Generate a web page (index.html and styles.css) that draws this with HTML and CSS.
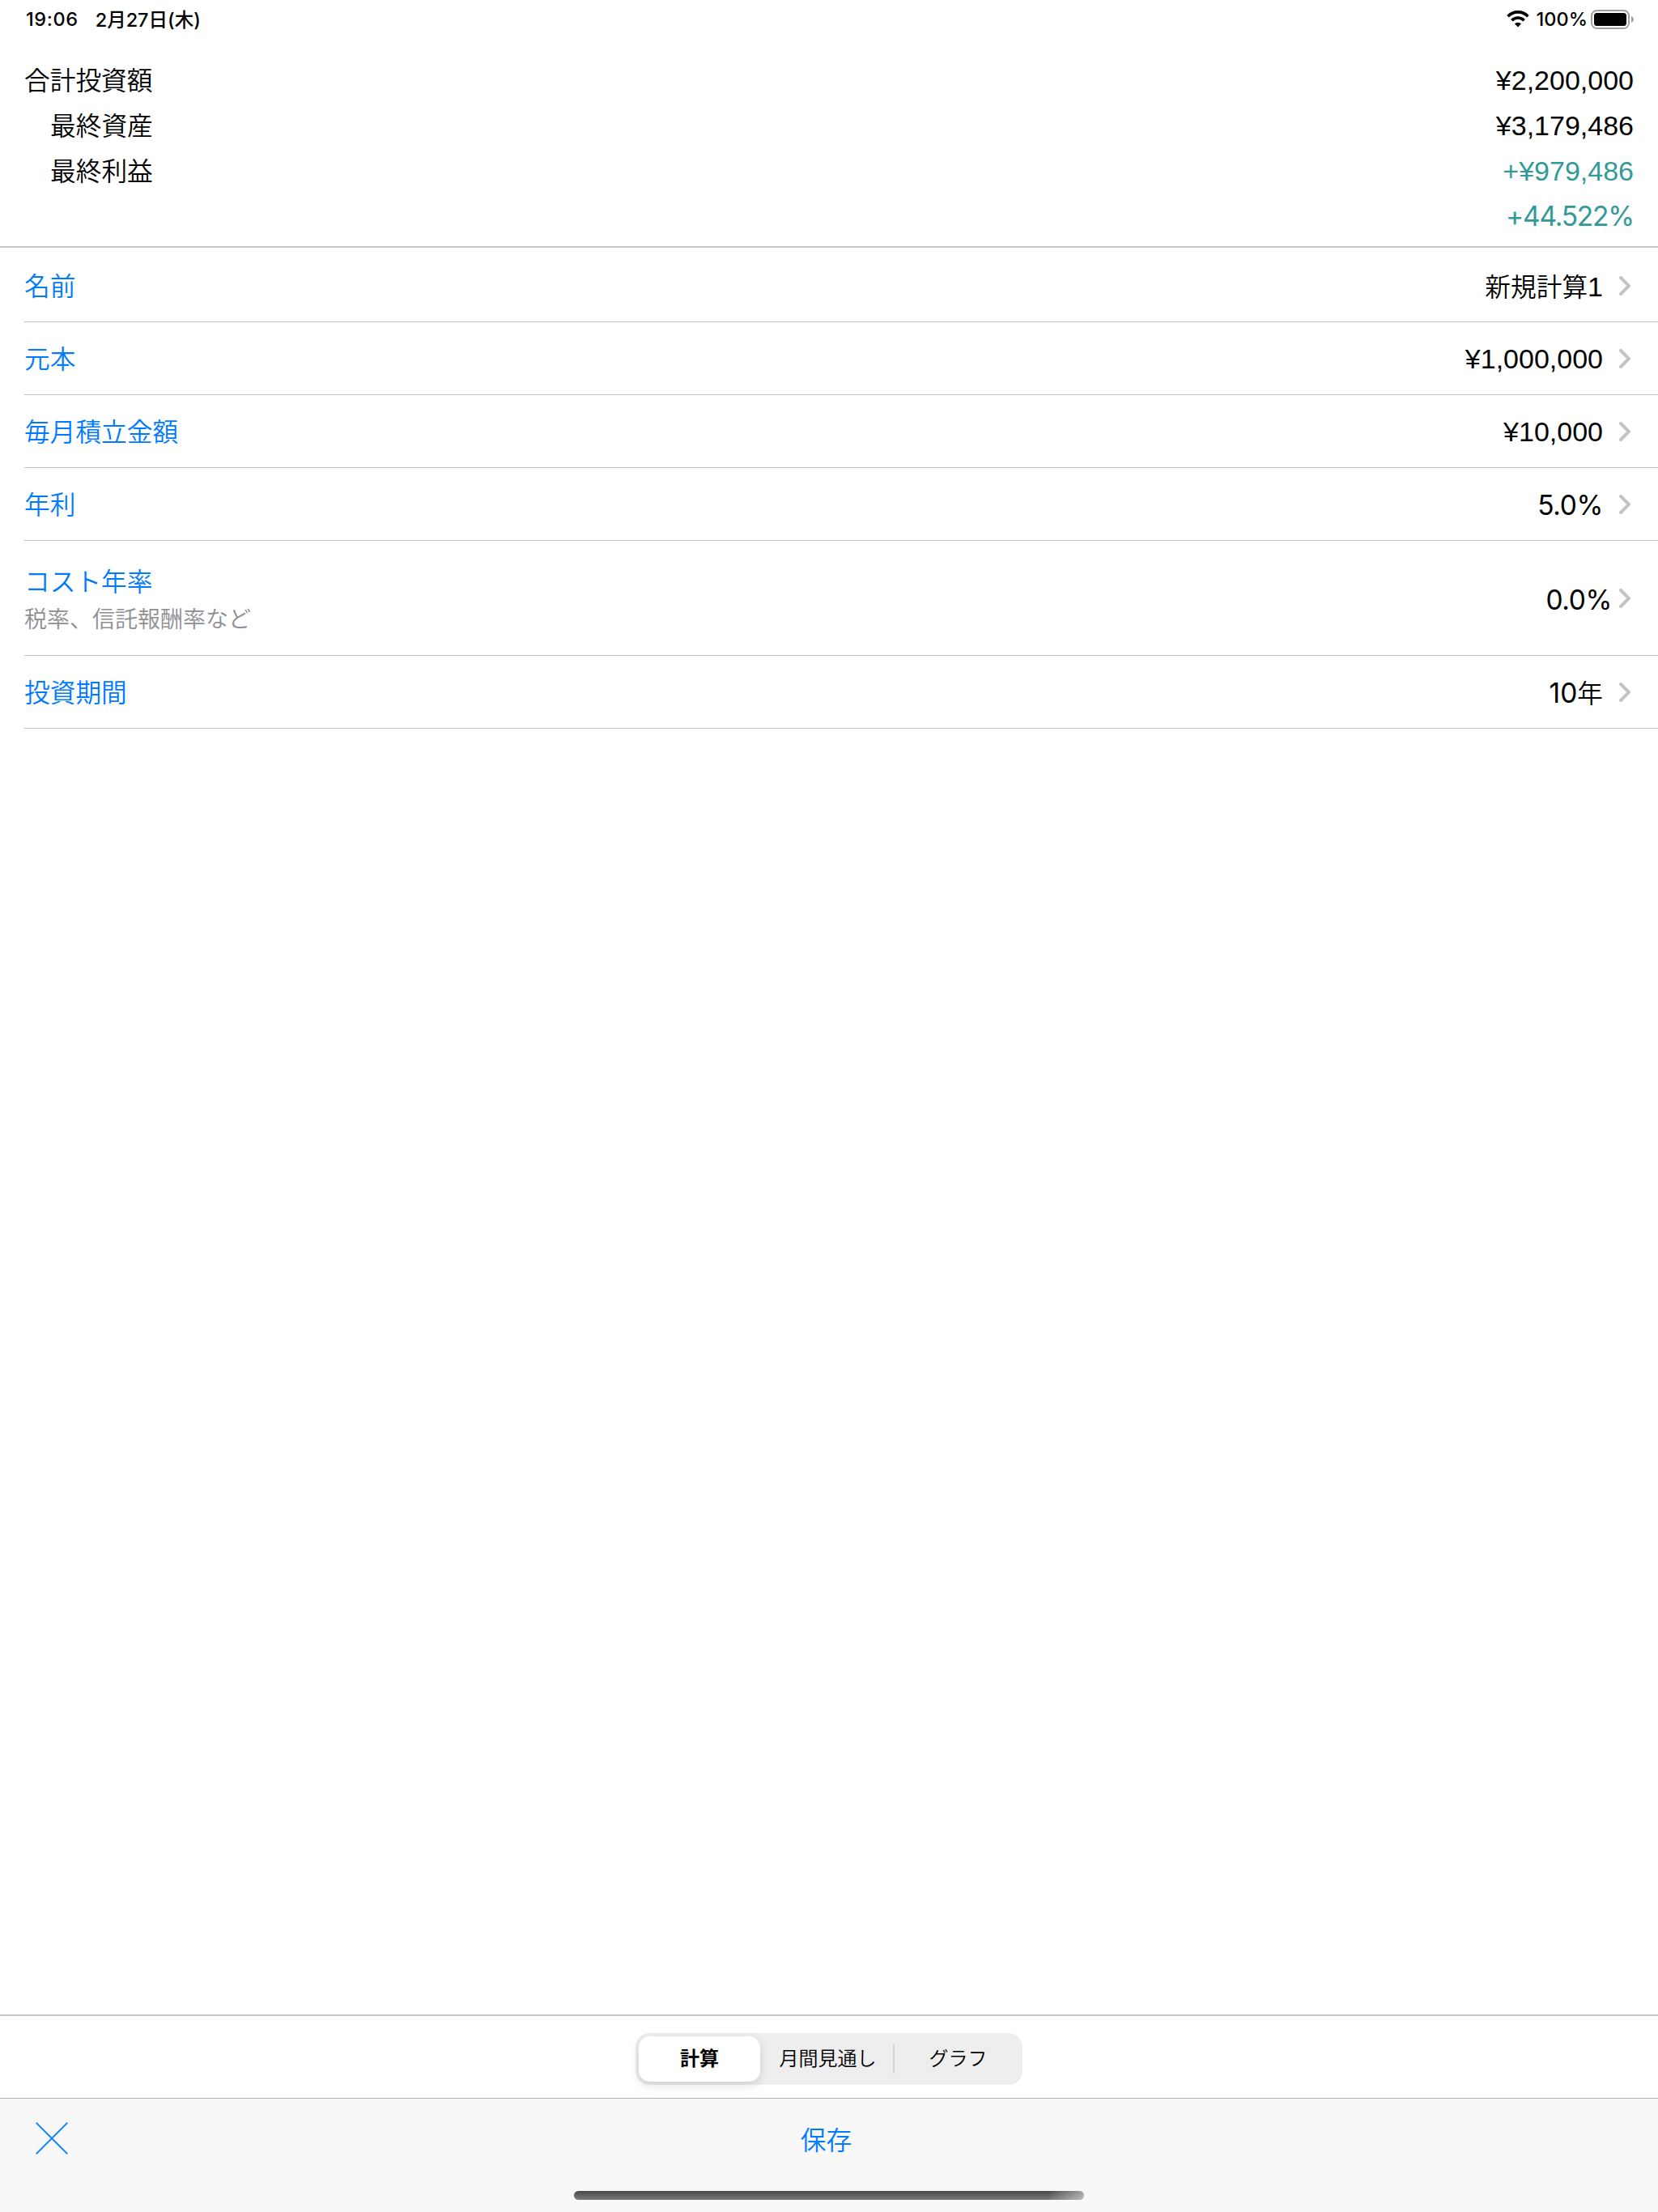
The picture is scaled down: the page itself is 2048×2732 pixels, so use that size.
FILE: index.html
```html
<!DOCTYPE html>
<html lang="ja">
<head>
    <meta charset="UTF-8">
    <meta name="viewport" content="width=device-width, initial-scale=1.0">
    <title>新規計算1</title>
    <link rel="stylesheet" href="styles.css">
</head>
<body>

    <div class="app">
        <div class="status-bar">
            <span class="time">19:06</span>
            <span class="date">2月27日(木)</span>
            <div class="status-icons">
                <svg class="wifi" width="28" height="21" viewBox="0 0 28 21">
                    <path d="M1.6 7.2 A17.3 17.3 0 0 1 26.4 7.2" fill="none" stroke="#000" stroke-width="3.7"/>
                    <path d="M6.4 12.2 A10.6 10.6 0 0 1 21.6 12.2" fill="none" stroke="#000" stroke-width="3.6"/>
                    <path d="M14 20.4 L9.9 16.3 A6 6 0 0 1 18.1 16.3 Z" fill="#000"/>
                </svg>
                <span class="battery-text">100%</span>
                <svg class="battery" width="54" height="24" viewBox="0 0 54 24">
                    <rect x="1" y="1" width="46" height="22" rx="6.5" fill="none" stroke="#a0a0a0" stroke-width="2"/>
                    <rect x="4" y="4" width="40" height="16" rx="3.5" fill="#000"/>
                    <path d="M50 8 Q53 9.5 53 12 Q53 14.5 50 16 Z" fill="#a0a0a0"/>
                </svg>
            </div>
        </div>

        <!-- 合計 -->
        <div class="summary">
            <div class="summary-row"><span class="title">合計投資額</span><span class="yen">¥2,200,000</span></div>
            <div class="summary-row"><span class="title indent">最終資産</span><span class="yen">¥3,179,486</span></div>
            <div class="summary-row"><span class="title indent">最終利益</span><span class="yen profit">+¥979,486</span></div>
            <div class="summary-row"><span></span><span class="percent profit rate">+44.522%</span></div>
        </div>

        <!-- 入力項目 -->
        <div class="list">
            <div class="row">
                <span class="label">名前</span>
                <span class="value name"><span class="kanji">新規計算</span>1</span>
                <svg class="arrow" width="14" height="24" viewBox="0 0 14 24"><path d="M2 2 L12 12 L2 22"/></svg>
            </div>
            <div class="row">
                <span class="label">元本</span>
                <span class="value yen">¥1,000,000</span>
                <svg class="arrow" width="14" height="24" viewBox="0 0 14 24"><path d="M2 2 L12 12 L2 22"/></svg>
            </div>
            <div class="row">
                <span class="label">毎月積立金額</span>
                <span class="value yen">¥10,000</span>
                <svg class="arrow" width="14" height="24" viewBox="0 0 14 24"><path d="M2 2 L12 12 L2 22"/></svg>
            </div>
            <div class="row">
                <span class="label">年利</span>
                <span class="value percent">5.0%</span>
                <svg class="arrow" width="14" height="24" viewBox="0 0 14 24"><path d="M2 2 L12 12 L2 22"/></svg>
            </div>
            <div class="row cost">
                <div class="label">
                    <div>コスト年率</div>
                    <div class="note">税率、信託報酬率など</div>
                </div>
                <span class="value percent">0.0%</span>
                <svg class="arrow" width="14" height="24" viewBox="0 0 14 24"><path d="M2 2 L12 12 L2 22"/></svg>
            </div>
            <div class="row">
                <span class="label">投資期間</span>
                <span class="value period">10<span class="kanji">年</span></span>
                <svg class="arrow" width="14" height="24" viewBox="0 0 14 24"><path d="M2 2 L12 12 L2 22"/></svg>
            </div>
        </div>

        <div class="tabs">
            <div class="segmented">
                <div class="segment selected">計算</div>
                <div class="segment middle">月間見通し</div>
                <div class="divider"></div>
                <div class="segment last">グラフ</div>
            </div>
        </div>

        <div class="toolbar">
            <div class="toolbar-items">
                <svg class="close" width="40" height="40" viewBox="0 0 40 40"><path d="M0.7 0.7 L39.3 39.3 M39.3 0.7 L0.7 39.3"/></svg>
                <span class="save">保存</span>
            </div>
            <div class="home-indicator"></div>
        </div>
    </div>

</body>
</html>
```
FILE: styles.css
```css
* {
    box-sizing: border-box;
}
body {
    margin: 0;
    background-color: #fff;
    color: #000;
    font-family: "Noto Sans CJK JP", sans-serif;
    font-size: 31.7px;
    font-weight: 350;
}
.app {
    display: flex;
    flex-direction: column;
    height: 2732px;
}
.status-bar {
    display: flex;
    align-items: center;
    height: 48px;
    padding: 0 29px 1px 32px;
    font-family: Inter, "Noto Sans CJK JP", sans-serif;
    font-size: 23.5px;
    font-weight: 500;
}
.time {
    letter-spacing: 0.6px;
}
.date {
    margin-left: 21px;
    padding-bottom: 1px;
}
.status-icons {
    display: flex;
    align-items: center;
    margin-left: auto;
}
.battery-text {
    margin: 0 4px 0 9px;
}
.summary {
    height: 258px;
    padding: 22px 30px 0;
    border-bottom: 2px solid #c6c6c8;
}
.summary-row {
    display: flex;
    justify-content: space-between;
    align-items: center;
    height: 56px;
}
.title {
    padding-bottom: 2px;
}
.indent {
    padding-left: 32px;
}
.yen {
    padding-top: 2px;
    font-family: "Liberation Sans", sans-serif;
    font-size: 34px;
    font-weight: 400;
}
.percent {
    padding-top: 2px;
    font-family: Inter, sans-serif;
    font-size: 33.5px;
    font-weight: 400;
    letter-spacing: -0.4px;
}
.rate {
    letter-spacing: -1.2px;
}
.name,
.period {
    padding-bottom: 2px;
    font-family: "Liberation Sans", sans-serif;
    font-size: 34px;
    font-weight: 400;
}
.period {
    font-family: Inter, sans-serif;
    font-size: 33.5px;
}
.kanji {
    font-family: "Noto Sans CJK JP", sans-serif;
    font-size: 31.7px;
    font-weight: 350;
}
.profit {
    color: #339999;
}
.list {
    flex: 1;
    padding: 2px 0 0 30px;
}
.row {
    display: flex;
    align-items: center;
    height: 90px;
    padding-right: 34px;
    border-bottom: 1px solid #c4c4c6;
}
.label {
    padding-bottom: 3px;
    color: #007aff;
}
.value {
    margin-left: auto;
}
.arrow {
    margin-left: 20px;
    fill: none;
    stroke: #c4c4c6;
    stroke-width: 4;
    stroke-linecap: round;
}
.cost {
    height: 142px;
}
.cost .label {
    padding: 2px 0 0;
    line-height: 47px;
}
.cost .percent {
    padding-top: 4px;
}
.cost .arrow {
    margin-left: 9px;
}
.note {
    color: #8e8e93;
    font-size: 28px;
}
.tabs {
    display: flex;
    justify-content: center;
    height: 103px;
    padding-top: 21px;
    border-top: 2px solid #c6c6c8;
}
.segmented {
    display: flex;
    align-items: center;
    width: 478px;
    height: 64px;
    padding: 4px;
    border-radius: 17px;
    background-color: #eeeeef;
    font-size: 24px;
    font-weight: 350;
}
.segment {
    height: 56px;
    line-height: 52px;
    text-align: center;
}
.selected {
    width: 150px;
    border-radius: 14px;
    background-color: #fff;
    box-shadow: 0 4px 12px rgba(0, 0, 0, 0.14);
    font-weight: 700;
}
.middle {
    width: 164px;
    padding-left: 3px;
}
.divider {
    width: 2px;
    height: 36px;
    background-color: #d3d3d5;
}
.last {
    flex: 1;
    padding-left: 3px;
}
.toolbar {
    display: flex;
    flex-direction: column;
    align-items: center;
    height: 141px;
    border-top: 1px solid #b2b2b2;
    background-color: #f8f8f8;
}
.toolbar-items {
    display: flex;
    align-items: center;
    width: 100%;
    height: 98px;
    padding: 0 44px;
}
.close {
    fill: none;
    stroke: #1a88ff;
    stroke-width: 2;
}
.save {
    flex: 1;
    padding: 0 47px 1px 0;
    color: #007aff;
    text-align: center;
}
.home-indicator {
    width: 630px;
    height: 11px;
    margin-top: 16px;
    border-radius: 6px;
    background: linear-gradient(90deg, transparent 93%, rgba(248, 248, 248, 0.5)), linear-gradient(#484848, #7b7b7b);
}
```
